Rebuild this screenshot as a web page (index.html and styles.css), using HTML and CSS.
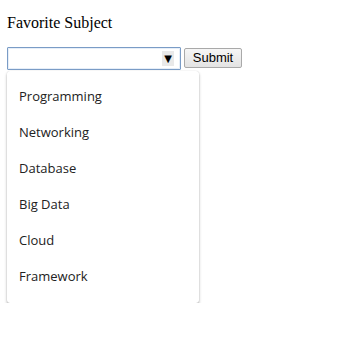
FILE: index.html
```html
<!DOCTYPE html>
<html>
<head>
<meta charset="utf-8">
<link rel="stylesheet" href="styles.css">
</head>
<body>
<form class="form">
  <div class="label">Favorite Subject</div>
  <div class="row">
    <div class="field">
      <div class="combo">
        <span class="arrow">▼</span>
      </div>
      <div class="menu">
        <div class="item">Programming</div>
        <div class="item">Networking</div>
        <div class="item">Database</div>
        <div class="item">Big Data</div>
        <div class="item">Cloud</div>
        <div class="item">Framework</div>
      </div>
    </div>
    <button type="button" class="submit">Submit</button>
  </div>
</form>
</body>
</html>
```
FILE: styles.css
```css
html, body {
  margin: 0;
  padding: 0;
  background: #fff;
}
.form {
  padding: 14px 7px 0 7px;
  font-family: "Liberation Serif", serif;
}
.label {
  font-size: 16px;
  line-height: 18px;
  color: #000;
  height: 18px;
}
.row {
  display: flex;
  align-items: flex-start;
  gap: 3px;
  margin-top: 15px;
}
.field {
  display: flex;
  flex-direction: column;
  width: 174px;
}
.combo {
  box-sizing: border-box;
  height: 23px;
  border: 1px solid #7a9cc6;
  border-radius: 1px;
  background: #fff;
  display: flex;
  justify-content: flex-end;
  align-items: center;
  padding-right: 6px;
  box-shadow: inset 0 0 0 1px #e6eef8;
}
.arrow {
  display: flex;
  align-items: center;
  justify-content: center;
  width: 12px;
  height: 15px;
  background: #e9e9e9;
  color: #000;
  font-family: "DejaVu Sans", sans-serif;
  font-size: 10px;
  line-height: 15px;
}
.menu {
  margin-top: 1px;
  width: 192px;
  box-sizing: border-box;
  padding: 7px 0 9px;
  background: #fff;
  border-radius: 3px;
  box-shadow: 0 2px 3px rgba(0,0,0,0.3), 0 0 1px rgba(0,0,0,0.2);
  font-family: "Open Sans", "Noto Sans", sans-serif;
  font-size: 13px;
  color: #222;
}
.item {
  height: 36px;
  line-height: 36px;
  padding-left: 12px;
}
.submit {
  margin-top: 1px;
  height: 20px;
  width: 58px;
  box-sizing: border-box;
  border: 1px solid #a9a9a9;
  border-radius: 2px;
  background: linear-gradient(#f6f6f6, #e3e3e3);
  font-family: "Liberation Sans", Arial, sans-serif;
  font-size: 13px;
  color: #000;
  padding: 0;
  line-height: 18px;
}
```
